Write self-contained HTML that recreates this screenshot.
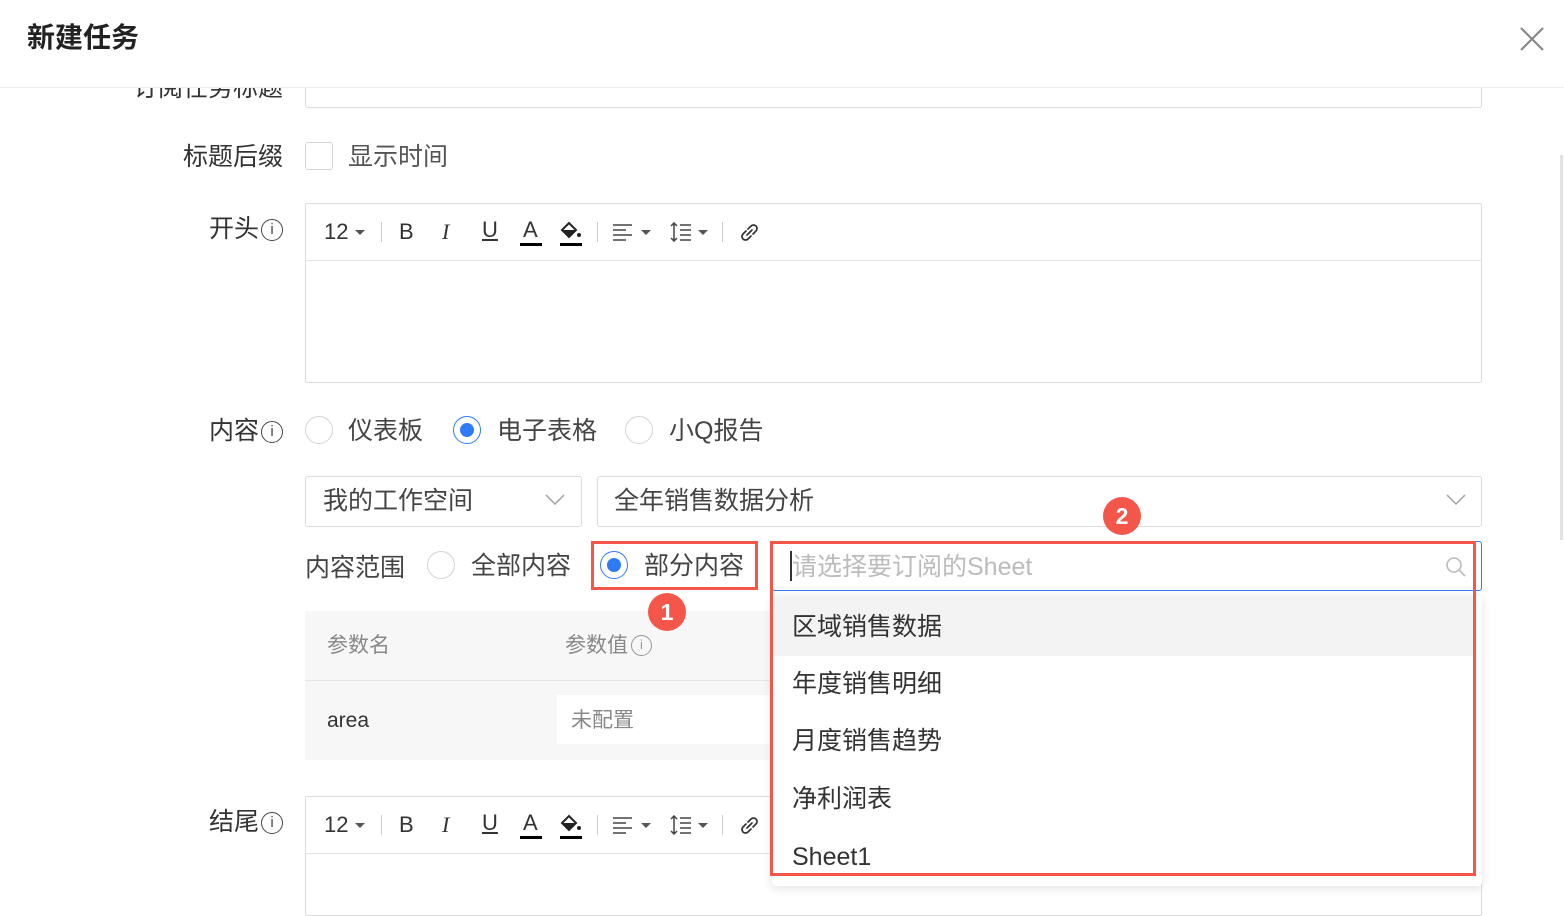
<!DOCTYPE html>
<html><head><meta charset="utf-8"><style>
*{box-sizing:border-box;margin:0;padding:0}
body{width:1564px;height:902px;overflow:hidden;background:#fff;position:relative;font-family:"Liberation Sans","Noto Sans CJK SC",sans-serif;color:#333}
.a{position:absolute}
.lbl{position:absolute;font-size:25px;color:#333;line-height:32px;white-space:nowrap}
.rt{text-align:right;right:1281px}
.box{position:absolute;border:1px solid #dcdcdc;border-radius:3px;background:#fff}
.radio{position:absolute;width:28px;height:28px;border:1px solid #d4d4d4;border-radius:50%;background:#fff}
.radio.on{border-color:#2f7bf5}
.radio.on::after{content:"";position:absolute;left:6px;top:6px;width:14px;height:14px;border-radius:50%;background:#2f7bf5}
.info{display:inline-block;width:22px;height:22px;border:1.6px solid #444;border-radius:50%;font-size:15px;line-height:19px;text-align:center;font-family:"Liberation Sans",sans-serif;vertical-align:3px;margin-left:2px;color:#444}
.tb{position:absolute;font-size:22px;color:#333;line-height:24px}
.sep{position:absolute;width:1px;height:20px;background:#ccc}
.car{position:absolute;width:0;height:0;border-left:5px solid transparent;border-right:5px solid transparent;border-top:5px solid #555}
.badge{position:absolute;width:38px;height:38px;border-radius:50%;background:#f4574a;color:#fff;font-size:23px;font-weight:bold;text-align:center;line-height:38px}
.item{position:absolute;left:0;right:8px;height:57px;font-size:25px;line-height:57px;padding-left:20px;color:#333}
</style></head><body>

<div class="lbl rt" style="top:72px">订阅任务标题</div>
<div class="box" style="left:305px;top:60px;width:1177px;height:48px"></div>

<div class="a" style="left:0;top:0;width:1564px;height:88px;background:#fff;border-bottom:1px solid #ececec"></div>
<div class="a" style="left:27px;top:19px;font-size:28px;font-weight:bold;color:#222;line-height:38px">新建任务</div>
<svg class="a" style="left:1519px;top:26px" width="26" height="26"><path d="M2 2L24 24M24 2L2 24" stroke="#888" stroke-width="2.2"/></svg>
<div class="a" style="left:1560px;top:155px;width:3px;height:385px;background:#e2e2e2"></div>

<div class="lbl rt" style="top:141px">标题后缀</div>
<div class="a" style="left:305px;top:142px;width:28px;height:28px;border:1px solid #d4d4d4;border-radius:3px"></div>
<div class="lbl" style="left:348px;top:141px;color:#555">显示时间</div>

<div class="lbl rt" style="top:213px">开头<span class="info">i</span></div>
<div class="box" style="left:305px;top:203px;width:1177px;height:180px;border-radius:2px"></div>
<div class="a" style="left:306px;top:260px;width:1175px;height:1px;background:#e3e3e3"></div>

<div class="lbl rt" style="top:415px">内容<span class="info">i</span></div>
<div class="radio" style="left:305px;top:416px"></div><div class="lbl" style="left:348px;top:415px;color:#444">仪表板</div>
<div class="radio on" style="left:453px;top:416px"></div><div class="lbl" style="left:497px;top:415px;color:#444">电子表格</div>
<div class="radio" style="left:625px;top:416px"></div><div class="lbl" style="left:669px;top:415px;color:#444">小Q报告</div>

<div class="box" style="left:305px;top:476px;width:277px;height:51px"></div>
<div class="lbl" style="left:323px;top:485px;color:#444">我的工作空间</div>
<svg class="a" style="left:545px;top:493px" width="20" height="14"><path d="M1 2L10 11L19 2" fill="none" stroke="#aaa" stroke-width="1.6"/></svg>
<div class="box" style="left:597px;top:476px;width:885px;height:51px"></div>
<div class="lbl" style="left:614px;top:485px;color:#444">全年销售数据分析</div>
<svg class="a" style="left:1446px;top:493px" width="20" height="14"><path d="M1 2L10 11L19 2" fill="none" stroke="#aaa" stroke-width="1.6"/></svg>

<div class="lbl" style="left:305px;top:552px;color:#444">内容范围</div>
<div class="radio" style="left:427px;top:551px"></div><div class="lbl" style="left:471px;top:550px;color:#444">全部内容</div>
<div class="a" style="left:591px;top:541px;width:167px;height:49px;border:3px solid #f4574a"></div>
<div class="radio on" style="left:600px;top:551px"></div><div class="lbl" style="left:644px;top:550px;color:#444">部分内容</div>

<div class="a" style="left:305px;top:611px;width:480px;height:149px;background:#f7f7f7"></div>
<div class="a" style="left:305px;top:680px;width:480px;height:1px;background:#e6e6e6"></div>
<div class="lbl" style="left:327px;top:630px;font-size:21px;color:#888">参数名</div>
<div class="lbl" style="left:565px;top:630px;font-size:21px;color:#888">参数值<span class="info" style="width:21px;height:21px;border-color:#999;color:#999;font-size:13px;line-height:18px;margin-left:3px">i</span></div>
<div class="lbl" style="left:327px;top:705px;font-size:21px;color:#333">area</div>
<div class="a" style="left:557px;top:695px;width:228px;height:49px;background:#fff"></div>
<div class="lbl" style="left:571px;top:705px;font-size:21px;color:#888">未配置</div>
<div class="badge" style="left:648px;top:593px">1</div>

<div class="lbl rt" style="top:806px">结尾<span class="info">i</span></div>
<div class="box" style="left:305px;top:796px;width:1177px;height:120px;border-radius:2px"></div>
<div class="a" style="left:306px;top:853px;width:1175px;height:1px;background:#e3e3e3"></div>

<div id="tb1"></div>

<div class="a" style="left:772px;top:541px;width:710px;height:50px;background:#fff;border:1px solid #2f7bf5;border-radius:3px"></div>
<div class="a" style="left:790px;top:551px;width:2px;height:30px;background:#333"></div>
<div class="lbl" style="left:792px;top:551px;color:#bbb">请选择要订阅的Sheet</div>
<svg class="a" style="left:1445px;top:556px" width="22" height="22"><circle cx="9" cy="9" r="7" fill="none" stroke="#bbb" stroke-width="1.6"/><path d="M14 14L20 20" stroke="#bbb" stroke-width="1.6"/></svg>
<div class="a" style="left:772px;top:596px;width:710px;height:290px;background:#fff;border-radius:4px;box-shadow:0 2px 10px rgba(0,0,0,.12);overflow:hidden">
<div class="item" style="top:0;background:#f3f3f3;height:60px;line-height:62px">区域销售数据</div>
<div class="item" style="top:60px">年度销售明细</div>
<div class="item" style="top:117px">月度销售趋势</div>
<div class="item" style="top:175px">净利润表</div>
<div class="item" style="top:233px">Sheet1</div>
</div>
<div class="a" style="left:770px;top:541px;width:706px;height:335px;border:3px solid #f4574a"></div>
<div class="badge" style="left:1103px;top:497px">2</div>

<script>
function tb(y){
var h='';
h+='<div class="tb" style="left:324px;top:'+(y-12)+'px">12</div><div class="car" style="left:355px;top:'+(y-2)+'px"></div>';
h+='<div class="sep" style="left:381px;top:'+(y-10)+'px"></div>';
h+='<div class="tb" style="left:399px;top:'+(y-12)+'px">B</div>';
h+='<div class="tb" style="left:442px;top:'+(y-12)+'px;font-family:Liberation Serif,serif;font-style:italic">I</div>';
h+='<div class="tb" style="left:482px;top:'+(y-14)+'px;text-decoration:underline">U</div>';
h+='<div class="tb" style="left:523px;top:'+(y-14)+'px">A</div><div class="a" style="left:520px;top:'+(y+11)+'px;width:22px;height:3px;background:#000"></div>';
h+='<svg class="a" style="left:559px;top:'+(y-12)+'px" width="24" height="22"><path d="M3 10L10 3L17 10L10 17Z" fill="none" stroke="#222" stroke-width="2"/><path d="M3 10L17 10L10 17Z" fill="#222"/><circle cx="20" cy="15" r="2" fill="#222"/></svg><div class="a" style="left:560px;top:'+(y+11)+'px;width:22px;height:3px;background:#000"></div>';
h+='<div class="sep" style="left:597px;top:'+(y-10)+'px"></div>';
h+='<svg class="a" style="left:612px;top:'+(y-9)+'px" width="22" height="18"><path d="M1 2H20M1 7H14M1 12H20M1 17H14" stroke="#444" stroke-width="1.5"/></svg><div class="car" style="left:641px;top:'+(y-2)+'px"></div>';
h+='<svg class="a" style="left:670px;top:'+(y-10)+'px" width="22" height="20"><path d="M4 1V19M1 4L4 1L7 4M1 16L4 19L7 16M10 3H21M10 8H21M10 13H21M10 18H21" fill="none" stroke="#444" stroke-width="1.5"/></svg><div class="car" style="left:698px;top:'+(y-2)+'px"></div>';
h+='<div class="sep" style="left:722px;top:'+(y-10)+'px"></div>';
h+='<svg class="a" style="left:739px;top:'+(y-10)+'px" width="21" height="21"><path d="M9 7L12 4a3.5 3.5 0 0 1 5 5L14 12M12 14L9 17a3.5 3.5 0 0 1-5-5L7 9M8 13L13 8" fill="none" stroke="#333" stroke-width="1.7" stroke-linecap="round"/></svg>';
return h;}
document.getElementById('tb1').outerHTML=tb(232)+tb(825);
</script>
</body></html>
